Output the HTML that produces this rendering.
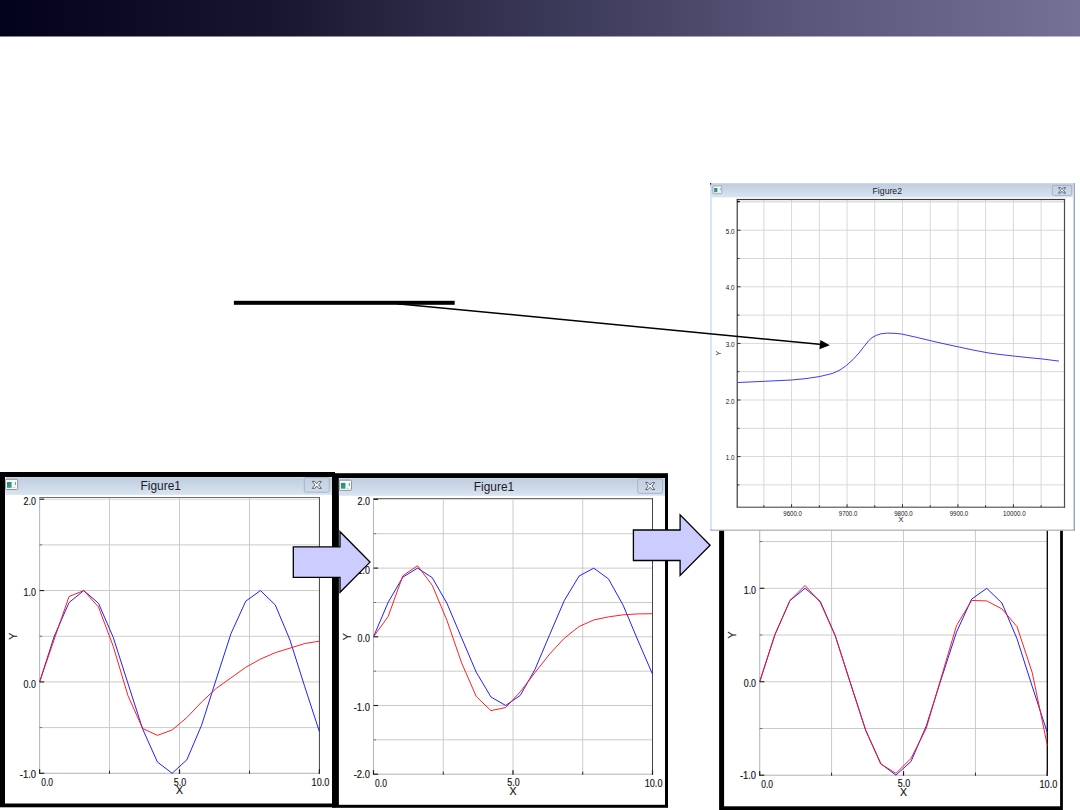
<!DOCTYPE html>
<html lang="en">
<head>
<meta charset="utf-8">
<title>Figure1 / Figure2</title>
<style>
html,body{margin:0;padding:0;background:#fff;}
body{width:1080px;height:810px;position:relative;overflow:hidden;font-family:"Liberation Sans",sans-serif;}
svg{position:absolute;left:0;top:0;display:block;}
svg text{font-family:"Liberation Sans",sans-serif;}
svg .f1 text{stroke:#111;stroke-width:0.15px;}
svg .f1 text.ttl{stroke:none;}
</style>
</head>
<body>
<svg width="1080" height="810" viewBox="0 0 1080 810">
<defs>
<linearGradient id="tb" x1="0" y1="0" x2="0" y2="1"><stop offset="0" stop-color="#d3e1f1"/><stop offset="0.08" stop-color="#c1cedf"/><stop offset="1" stop-color="#d8e4f1"/></linearGradient>
<linearGradient id="cb" x1="0" y1="0" x2="0" y2="1"><stop offset="0" stop-color="#c2cfe0"/><stop offset="1" stop-color="#cfdbea"/></linearGradient>
<linearGradient id="ic" x1="0" y1="0" x2="0.6" y2="1"><stop offset="0" stop-color="#3b6fb6"/><stop offset="0.45" stop-color="#2f8f8c"/><stop offset="1" stop-color="#3aa45c"/></linearGradient>
<linearGradient id="hdr" x1="0" y1="0" x2="1" y2="0"><stop offset="0" stop-color="#02021a"/><stop offset="0.25" stop-color="#18162e"/><stop offset="0.5" stop-color="#393756"/><stop offset="0.75" stop-color="#5a577b"/><stop offset="1" stop-color="#747096"/></linearGradient>
</defs>
<rect id="header-band" x="0" y="0" width="1080" height="36.5" fill="url(#hdr)"/>
<g id="figure1-step3" class="f1">
<rect x="719.1" y="476" width="343.8" height="334" fill="#000"/>
<rect x="724.1" y="480" width="336" height="326.3" fill="#fff"/>
<rect x="759.7" y="728.02" width="287.6" height="0.9" fill="#c6c6c6"/>
<rect x="759.7" y="681.3" width="287.6" height="0.9" fill="#c6c6c6"/>
<rect x="759.7" y="634.58" width="287.6" height="0.9" fill="#c6c6c6"/>
<rect x="759.7" y="587.85" width="287.6" height="0.9" fill="#c6c6c6"/>
<rect x="759.7" y="541.12" width="287.6" height="0.9" fill="#c6c6c6"/>
<rect x="831.15" y="493.15" width="0.9" height="282.05" fill="#c6c6c6"/>
<rect x="903.05" y="493.15" width="0.9" height="282.05" fill="#c6c6c6"/>
<rect x="974.95" y="493.15" width="0.9" height="282.05" fill="#c6c6c6"/>
<rect x="759.2" y="492.65" width="288.7" height="1" fill="#6e6e6e"/>
<rect x="760.7" y="494.4" width="286.1" height="0.9" fill="#cfcfcf"/>
<rect x="759.2" y="774.65" width="288.7" height="1.1" fill="#b8b8b8"/>
<rect x="759.15" y="493.15" width="1.1" height="282.05" fill="#b8b8b8"/>
<rect x="1046.65" y="493.15" width="1.3" height="282.55" fill="#000"/>
<rect x="759.7" y="774.65" width="4.6" height="1.1" fill="#1c1c1c"/>
<rect x="759.7" y="728.02" width="2.6" height="0.9" fill="#6a6a6a"/>
<rect x="759.7" y="681.2" width="4.6" height="1.1" fill="#1c1c1c"/>
<rect x="759.7" y="634.58" width="2.6" height="0.9" fill="#6a6a6a"/>
<rect x="759.7" y="587.75" width="4.6" height="1.1" fill="#1c1c1c"/>
<rect x="759.7" y="541.12" width="2.6" height="0.9" fill="#6a6a6a"/>
<rect x="759.7" y="494.3" width="4.6" height="1.1" fill="#1c1c1c"/>
<rect x="759.1" y="771.2" width="1.2" height="4.5" fill="#1c1c1c"/>
<rect x="831.15" y="772.6" width="0.9" height="3.1" fill="#1c1c1c"/>
<rect x="902.9" y="771.2" width="1.2" height="4.5" fill="#1c1c1c"/>
<rect x="974.95" y="772.6" width="0.9" height="3.1" fill="#1c1c1c"/>
<rect x="1046.7" y="771.2" width="1.2" height="4.5" fill="#1c1c1c"/>
<polyline fill="none" stroke="#1414ff" stroke-width="1.0" stroke-opacity="0.95" stroke-linejoin="round" points="759.7,681.75 774.84,634.81 789.97,600.57 805.11,588.3 820.25,601.33 835.38,636.13 850.52,683.27 865.66,730.01 880.79,763.68 895.93,775.17 911.07,761.38 926.21,726.04 941.34,678.7 956.48,632.2 971.62,599.1 986.75,588.38 1001.89,602.93 1017.03,638.81 1032.16,686.32 1047.3,732.59"/>
<polyline fill="none" stroke="#ff1414" stroke-width="1.0" stroke-opacity="0.95" stroke-linejoin="round" points="759.7,681.75 774.84,635.03 789.97,600.45 805.11,585.5 820.25,602.32 835.38,635.96 850.52,683.62 865.66,730.34 880.79,763.99 895.93,773.33 911.07,758.38 926.21,728.48 941.34,677.08 956.48,625.68 971.62,600.45 986.75,600.92 1001.89,608.86 1017.03,626.61 1032.16,672.4 1047.3,745.3"/>
<text x="756.1" y="593.9" font-size="10.5" text-anchor="end" textLength="12.4" lengthAdjust="spacingAndGlyphs" fill="#111">1.0</text>
<text x="756.1" y="687.35" font-size="10.5" text-anchor="end" textLength="12.4" lengthAdjust="spacingAndGlyphs" fill="#111">0.0</text>
<text x="756.1" y="779.4" font-size="10.5" text-anchor="end" textLength="16.2" lengthAdjust="spacingAndGlyphs" fill="#111">-1.0</text>
<text x="761.3" y="788.2" font-size="10.5" text-anchor="start" textLength="11.8" lengthAdjust="spacingAndGlyphs" fill="#111">0.0</text>
<text x="904" y="787.4" font-size="10.5" text-anchor="middle" textLength="12.4" lengthAdjust="spacingAndGlyphs" fill="#111">5.0</text>
<text x="1057.3" y="788.2" font-size="10.5" text-anchor="end" textLength="17.8" lengthAdjust="spacingAndGlyphs" fill="#111">10.0</text>
<text x="903.5" y="796.2" font-size="10.5" text-anchor="middle" textLength="7" lengthAdjust="spacingAndGlyphs" fill="#111">X</text>
<text transform="translate(735.5,635.03) rotate(-90) scale(-1,1)" font-size="10.5" text-anchor="middle" fill="#111" textLength="7" lengthAdjust="spacingAndGlyphs">Y</text>
</g>
<g id="figure1-step1" class="f1">
<rect x="0" y="472" width="335" height="335.3" fill="#000"/>
<rect x="5" y="477" width="327" height="326.5" fill="#fff"/>
<rect x="5" y="477" width="327" height="17.9" fill="url(#tb)"/>
<rect x="5" y="477" width="1" height="17.9" fill="#e2edf9"/>
<rect x="5.4" y="479.3" width="12.2" height="10.2" rx="1.2" fill="#fbfbfc" stroke="#7d7d80" stroke-width="0.8"/><rect x="7" y="482" width="4.6" height="5.8" fill="url(#ic)"/><rect x="14.9" y="482.1" width="0.9" height="3" fill="url(#ic)"/><rect x="12.4" y="487.3" width="3.2" height="0.7" fill="#c9c9cc"/>
<rect x="304.3" y="477.6" width="25" height="14.6" rx="1.6" fill="url(#cb)" stroke="#9fb0cb" stroke-width="0.9"/><path d="M312.3 481.4 h2.43 L316.8 483.78 L318.87 481.4 h2.43 L318.69 484.9 L321.3 488.4 h-2.43 L316.8 486.02 L314.73 488.4 h-2.43 L314.91 484.9 Z" fill="#fdfdfe" stroke="#434a5a" stroke-width="0.85" stroke-linejoin="round"/>
<text x="160.7" y="490" font-size="12" text-anchor="middle" textLength="40.3" lengthAdjust="spacingAndGlyphs" fill="#1b1b2b" class="ttl">Figure1</text>
<rect x="39.6" y="727.17" width="279.8" height="0.9" fill="#c6c6c6"/>
<rect x="39.6" y="681.48" width="279.8" height="0.9" fill="#c6c6c6"/>
<rect x="39.6" y="635.8" width="279.8" height="0.9" fill="#c6c6c6"/>
<rect x="39.6" y="590.12" width="279.8" height="0.9" fill="#c6c6c6"/>
<rect x="39.6" y="544.43" width="279.8" height="0.9" fill="#c6c6c6"/>
<rect x="109.1" y="497.5" width="0.9" height="275.8" fill="#c6c6c6"/>
<rect x="179.05" y="497.5" width="0.9" height="275.8" fill="#c6c6c6"/>
<rect x="249" y="497.5" width="0.9" height="275.8" fill="#c6c6c6"/>
<rect x="39.1" y="497" width="280.9" height="1" fill="#6e6e6e"/>
<rect x="40.6" y="498.75" width="278.3" height="0.9" fill="#cfcfcf"/>
<rect x="39.1" y="772.75" width="280.9" height="1.1" fill="#b8b8b8"/>
<rect x="39.05" y="497.5" width="1.1" height="275.8" fill="#b8b8b8"/>
<rect x="318.92" y="497.5" width="0.95" height="276.3" fill="#3a3a3a"/>
<rect x="39.6" y="772.75" width="4.6" height="1.1" fill="#1c1c1c"/>
<rect x="39.6" y="727.17" width="2.6" height="0.9" fill="#6a6a6a"/>
<rect x="39.6" y="681.38" width="4.6" height="1.1" fill="#1c1c1c"/>
<rect x="39.6" y="635.8" width="2.6" height="0.9" fill="#6a6a6a"/>
<rect x="39.6" y="590.02" width="4.6" height="1.1" fill="#1c1c1c"/>
<rect x="39.6" y="544.43" width="2.6" height="0.9" fill="#6a6a6a"/>
<rect x="39.6" y="498.65" width="4.6" height="1.1" fill="#1c1c1c"/>
<rect x="39" y="769.3" width="1.2" height="4.5" fill="#1c1c1c"/>
<rect x="109.1" y="770.7" width="0.9" height="3.1" fill="#1c1c1c"/>
<rect x="178.9" y="769.3" width="1.2" height="4.5" fill="#1c1c1c"/>
<rect x="249" y="770.7" width="0.9" height="3.1" fill="#1c1c1c"/>
<rect x="318.8" y="769.3" width="1.2" height="4.5" fill="#1c1c1c"/>
<polyline fill="none" stroke="#1414ff" stroke-width="1.0" stroke-opacity="0.95" stroke-linejoin="round" points="39.6,681.93 54.33,636.04 69.05,602.56 83.78,590.57 98.51,603.31 113.23,637.33 127.96,683.42 142.68,729.11 157.41,762.03 172.14,773.27 186.86,759.79 201.59,725.23 216.32,678.95 231.04,633.48 245.77,601.13 260.49,590.64 275.22,604.87 289.95,639.95 304.67,686.4 319.4,731.64"/>
<polyline fill="none" stroke="#ff1414" stroke-width="1.0" stroke-opacity="0.95" stroke-linejoin="round" points="39.6,681.93 54.33,638.99 69.05,596.51 83.78,590.57 98.51,607.01 113.23,646.3 127.96,695.64 142.68,728.53 157.41,735.38 172.14,729.99 186.86,717.57 201.59,702.03 216.32,688.33 231.04,677.82 245.77,667.31 260.49,659.09 275.22,652.7 289.95,648.13 304.67,643.56 319.4,641.18"/>
<text x="36" y="504.7" font-size="10.5" text-anchor="end" textLength="12.4" lengthAdjust="spacingAndGlyphs" fill="#111">2.0</text>
<text x="36" y="596.17" font-size="10.5" text-anchor="end" textLength="12.4" lengthAdjust="spacingAndGlyphs" fill="#111">1.0</text>
<text x="36" y="687.53" font-size="10.5" text-anchor="end" textLength="12.4" lengthAdjust="spacingAndGlyphs" fill="#111">0.0</text>
<text x="36" y="777.5" font-size="10.5" text-anchor="end" textLength="16.2" lengthAdjust="spacingAndGlyphs" fill="#111">-1.0</text>
<text x="41.2" y="786.3" font-size="10.5" text-anchor="start" textLength="11.8" lengthAdjust="spacingAndGlyphs" fill="#111">0.0</text>
<text x="180" y="785.5" font-size="10.5" text-anchor="middle" textLength="12.4" lengthAdjust="spacingAndGlyphs" fill="#111">5.0</text>
<text x="329.4" y="786.3" font-size="10.5" text-anchor="end" textLength="17.8" lengthAdjust="spacingAndGlyphs" fill="#111">10.0</text>
<text x="179.5" y="794.3" font-size="10.5" text-anchor="middle" textLength="7" lengthAdjust="spacingAndGlyphs" fill="#111">X</text>
<text transform="translate(17,636.25) rotate(-90) scale(-1,1)" font-size="10.5" text-anchor="middle" fill="#111" textLength="7" lengthAdjust="spacingAndGlyphs">Y</text>
</g>
<g id="figure1-step2" class="f1">
<rect x="332" y="473.2" width="336" height="334.6" fill="#000"/>
<rect x="338.9" y="478" width="326.1" height="326.8" fill="#fff"/>
<rect x="338.9" y="478" width="326.1" height="17.8" fill="url(#tb)"/>
<rect x="339.3" y="480.2" width="12.2" height="10.2" rx="1.2" fill="#fbfbfc" stroke="#7d7d80" stroke-width="0.8"/><rect x="340.9" y="482.9" width="4.6" height="5.8" fill="url(#ic)"/><rect x="348.8" y="483" width="0.9" height="3" fill="url(#ic)"/><rect x="346.3" y="488.2" width="3.2" height="0.7" fill="#c9c9cc"/>
<rect x="637.7" y="478.8" width="24.8" height="14.6" rx="1.6" fill="url(#cb)" stroke="#9fb0cb" stroke-width="0.9"/><path d="M645.6 482.6 h2.43 L650.1 484.98 L652.17 482.6 h2.43 L651.99 486.1 L654.6 489.6 h-2.43 L650.1 487.22 L648.03 489.6 h-2.43 L648.21 486.1 Z" fill="#fdfdfe" stroke="#434a5a" stroke-width="0.85" stroke-linejoin="round"/>
<text x="494" y="490.8" font-size="12" text-anchor="middle" textLength="40.3" lengthAdjust="spacingAndGlyphs" fill="#1b1b2b" class="ttl">Figure1</text>
<rect x="373.5" y="739.4" width="279" height="0.9" fill="#c6c6c6"/>
<rect x="373.5" y="705.05" width="279" height="0.9" fill="#c6c6c6"/>
<rect x="373.5" y="670.7" width="279" height="0.9" fill="#c6c6c6"/>
<rect x="373.5" y="636.35" width="279" height="0.9" fill="#c6c6c6"/>
<rect x="373.5" y="602" width="279" height="0.9" fill="#c6c6c6"/>
<rect x="373.5" y="567.65" width="279" height="0.9" fill="#c6c6c6"/>
<rect x="373.5" y="533.3" width="279" height="0.9" fill="#c6c6c6"/>
<rect x="442.8" y="498.5" width="0.9" height="275.7" fill="#c6c6c6"/>
<rect x="512.55" y="498.5" width="0.9" height="275.7" fill="#c6c6c6"/>
<rect x="582.3" y="498.5" width="0.9" height="275.7" fill="#c6c6c6"/>
<rect x="373" y="498" width="280.1" height="1" fill="#6e6e6e"/>
<rect x="374.5" y="498.95" width="277.5" height="0.9" fill="#cfcfcf"/>
<rect x="373" y="773.65" width="280.1" height="1.1" fill="#b8b8b8"/>
<rect x="372.95" y="498.5" width="1.1" height="275.7" fill="#b8b8b8"/>
<rect x="652.02" y="498.5" width="0.95" height="276.2" fill="#3a3a3a"/>
<rect x="373.5" y="773.65" width="4.6" height="1.1" fill="#1c1c1c"/>
<rect x="373.5" y="739.4" width="2.6" height="0.9" fill="#6a6a6a"/>
<rect x="373.5" y="704.95" width="4.6" height="1.1" fill="#1c1c1c"/>
<rect x="373.5" y="670.7" width="2.6" height="0.9" fill="#6a6a6a"/>
<rect x="373.5" y="636.25" width="4.6" height="1.1" fill="#1c1c1c"/>
<rect x="373.5" y="602" width="2.6" height="0.9" fill="#6a6a6a"/>
<rect x="373.5" y="567.55" width="4.6" height="1.1" fill="#1c1c1c"/>
<rect x="373.5" y="533.3" width="2.6" height="0.9" fill="#6a6a6a"/>
<rect x="373.5" y="498.85" width="4.6" height="1.1" fill="#1c1c1c"/>
<rect x="372.9" y="770.2" width="1.2" height="4.5" fill="#1c1c1c"/>
<rect x="442.8" y="771.6" width="0.9" height="3.1" fill="#1c1c1c"/>
<rect x="512.4" y="770.2" width="1.2" height="4.5" fill="#1c1c1c"/>
<rect x="582.3" y="771.6" width="0.9" height="3.1" fill="#1c1c1c"/>
<rect x="651.9" y="770.2" width="1.2" height="4.5" fill="#1c1c1c"/>
<polyline fill="none" stroke="#1414ff" stroke-width="1.0" stroke-opacity="0.95" stroke-linejoin="round" points="373.5,636.8 388.18,602.29 402.87,577.12 417.55,568.1 432.24,577.68 446.92,603.26 461.61,637.92 476.29,672.28 490.97,697.03 505.66,705.48 520.34,695.34 535.03,669.36 549.71,634.56 564.39,600.37 579.08,576.04 593.76,568.16 608.45,578.85 623.13,605.23 637.82,640.16 652.5,674.17"/>
<polyline fill="none" stroke="#ff1414" stroke-width="1.0" stroke-opacity="0.95" stroke-linejoin="round" points="373.5,636.8 388.18,616.46 402.87,575.73 417.55,565.7 432.24,585.27 446.92,620.31 461.61,662.91 476.29,696.57 490.97,710.65 505.66,707.56 520.34,691.76 535.03,672.52 549.71,653.98 564.39,638.17 579.08,626.5 593.76,619.97 608.45,616.88 623.13,614.82 637.82,613.92 652.5,613.72"/>
<text x="369.9" y="504.9" font-size="10.5" text-anchor="end" textLength="12.4" lengthAdjust="spacingAndGlyphs" fill="#111">2.0</text>
<text x="369.9" y="573.7" font-size="10.5" text-anchor="end" textLength="12.4" lengthAdjust="spacingAndGlyphs" fill="#111">1.0</text>
<text x="369.9" y="642.4" font-size="10.5" text-anchor="end" textLength="12.4" lengthAdjust="spacingAndGlyphs" fill="#111">0.0</text>
<text x="369.9" y="711.1" font-size="10.5" text-anchor="end" textLength="16.2" lengthAdjust="spacingAndGlyphs" fill="#111">-1.0</text>
<text x="369.9" y="778.4" font-size="10.5" text-anchor="end" textLength="16.2" lengthAdjust="spacingAndGlyphs" fill="#111">-2.0</text>
<text x="375.1" y="787.2" font-size="10.5" text-anchor="start" textLength="11.8" lengthAdjust="spacingAndGlyphs" fill="#111">0.0</text>
<text x="513.5" y="786.4" font-size="10.5" text-anchor="middle" textLength="12.4" lengthAdjust="spacingAndGlyphs" fill="#111">5.0</text>
<text x="662.5" y="787.2" font-size="10.5" text-anchor="end" textLength="17.8" lengthAdjust="spacingAndGlyphs" fill="#111">10.0</text>
<text x="513" y="795.2" font-size="10.5" text-anchor="middle" textLength="7" lengthAdjust="spacingAndGlyphs" fill="#111">X</text>
<text transform="translate(351,636.8) rotate(-90) scale(-1,1)" font-size="10.5" text-anchor="middle" fill="#111" textLength="7" lengthAdjust="spacingAndGlyphs">Y</text>
</g>
<g id="step-arrows">
<polygon fill="#ccccff" stroke="#000" stroke-width="1.3" stroke-linejoin="miter" points="293.3,546.9 340,546.9 340,531.7 370,562.1 340,592.3 340,577.4 293.3,577.4"/>
<polygon fill="#ccccff" stroke="#000" stroke-width="1.3" stroke-linejoin="miter" points="633.4,530 680.1,530 680.1,514.8 710.1,545.2 680.1,575.4 680.1,560.5 633.4,560.5"/>
</g>
<g id="figure2-window">
<rect x="710.1" y="183" width="364.7" height="347.6" fill="#d6e3f3"/>
<rect x="1073.9" y="183" width="0.9" height="347.6" fill="#8e929c"/>
<rect x="710.1" y="529.6" width="364.7" height="1" fill="#9a9ea7"/>
<rect x="711.9" y="184" width="361" height="345.4" fill="#fff"/>
<rect x="710.9" y="183" width="363" height="14.4" fill="url(#tb)"/>
<rect x="710.1" y="183" width="1" height="1.6" fill="#111"/>
<rect x="713" y="186.1" width="8.7" height="7.6" rx="0.86" fill="#fbfbfc" stroke="#7d7d80" stroke-width="0.58"/><rect x="714.15" y="188.04" width="3.31" height="4.18" fill="url(#ic)"/><rect x="719.84" y="188.12" width="0.65" height="2.16" fill="url(#ic)"/><rect x="718.04" y="191.86" width="2.3" height="0.5" fill="#c9c9cc"/>
<rect x="1052.4" y="185.4" width="19.3" height="10" rx="1.6" fill="url(#cb)" stroke="#9fb0cb" stroke-width="0.9"/><path d="M1058.6 187.6 h1.86 L1062.05 189.5 L1063.64 187.6 h1.86 L1063.5 190.4 L1065.5 193.2 h-1.86 L1062.05 191.3 L1060.46 193.2 h-1.86 L1060.6 190.4 Z" fill="#fdfdfe" stroke="#434a5a" stroke-width="0.85" stroke-linejoin="round"/>
<text x="887.3" y="193.9" font-size="9.4" text-anchor="middle" textLength="29.5" lengthAdjust="spacingAndGlyphs" fill="#1b1b2b" class="ttl">Figure2</text>
<rect x="763.43" y="199.5" width="0.9" height="307.7" fill="#d4d4d4"/>
<rect x="791.15" y="199.5" width="0.9" height="307.7" fill="#d4d4d4"/>
<rect x="818.87" y="199.5" width="0.9" height="307.7" fill="#d4d4d4"/>
<rect x="846.59" y="199.5" width="0.9" height="307.7" fill="#d4d4d4"/>
<rect x="874.31" y="199.5" width="0.9" height="307.7" fill="#d4d4d4"/>
<rect x="902.03" y="199.5" width="0.9" height="307.7" fill="#d4d4d4"/>
<rect x="929.75" y="199.5" width="0.9" height="307.7" fill="#d4d4d4"/>
<rect x="957.47" y="199.5" width="0.9" height="307.7" fill="#d4d4d4"/>
<rect x="985.19" y="199.5" width="0.9" height="307.7" fill="#d4d4d4"/>
<rect x="1012.91" y="199.5" width="0.9" height="307.7" fill="#d4d4d4"/>
<rect x="1040.63" y="199.5" width="0.9" height="307.7" fill="#d4d4d4"/>
<rect x="737.2" y="201.45" width="327.3" height="0.9" fill="#d4d4d4"/>
<rect x="737.2" y="229.75" width="327.3" height="0.9" fill="#d4d4d4"/>
<rect x="737.2" y="258.05" width="327.3" height="0.9" fill="#d4d4d4"/>
<rect x="737.2" y="286.35" width="327.3" height="0.9" fill="#d4d4d4"/>
<rect x="737.2" y="314.65" width="327.3" height="0.9" fill="#d4d4d4"/>
<rect x="737.2" y="342.95" width="327.3" height="0.9" fill="#d4d4d4"/>
<rect x="737.2" y="371.25" width="327.3" height="0.9" fill="#d4d4d4"/>
<rect x="737.2" y="399.55" width="327.3" height="0.9" fill="#d4d4d4"/>
<rect x="737.2" y="427.85" width="327.3" height="0.9" fill="#d4d4d4"/>
<rect x="737.2" y="456.15" width="327.3" height="0.9" fill="#d4d4d4"/>
<rect x="737.2" y="484.45" width="327.3" height="0.9" fill="#d4d4d4"/>
<rect x="736.7" y="198.9" width="328.4" height="1.2" fill="#3c3c3c"/>
<rect x="738.2" y="201.15" width="325.8" height="0.9" fill="#dedede"/>
<rect x="736.7" y="506.65" width="328.4" height="1.1" fill="#4c4c4c"/>
<rect x="736.65" y="199.5" width="1.1" height="307.7" fill="#2c2c2c"/>
<rect x="1063.9" y="199.5" width="1.2" height="308.2" fill="#4c4c4c"/>
<rect x="737.2" y="201.45" width="2.2" height="0.9" fill="#222"/>
<rect x="737.2" y="229.75" width="3.4" height="0.9" fill="#222"/>
<rect x="737.2" y="258.05" width="2.2" height="0.9" fill="#222"/>
<rect x="737.2" y="286.35" width="3.4" height="0.9" fill="#222"/>
<rect x="737.2" y="314.65" width="2.2" height="0.9" fill="#222"/>
<rect x="737.2" y="342.95" width="3.4" height="0.9" fill="#222"/>
<rect x="737.2" y="371.25" width="2.2" height="0.9" fill="#222"/>
<rect x="737.2" y="399.55" width="3.4" height="0.9" fill="#222"/>
<rect x="737.2" y="427.85" width="2.2" height="0.9" fill="#222"/>
<rect x="737.2" y="456.15" width="3.4" height="0.9" fill="#222"/>
<rect x="737.2" y="484.45" width="2.2" height="0.9" fill="#222"/>
<rect x="737.2" y="200.9" width="2.6" height="1.2" fill="#111"/>
<rect x="763.43" y="505.2" width="0.9" height="2" fill="#222"/>
<rect x="791.15" y="504.2" width="0.9" height="3" fill="#222"/>
<rect x="818.87" y="505.2" width="0.9" height="2" fill="#222"/>
<rect x="846.59" y="504.2" width="0.9" height="3" fill="#222"/>
<rect x="874.31" y="505.2" width="0.9" height="2" fill="#222"/>
<rect x="902.03" y="504.2" width="0.9" height="3" fill="#222"/>
<rect x="929.75" y="505.2" width="0.9" height="2" fill="#222"/>
<rect x="957.47" y="504.2" width="0.9" height="3" fill="#222"/>
<rect x="985.19" y="505.2" width="0.9" height="2" fill="#222"/>
<rect x="1012.91" y="504.2" width="0.9" height="3" fill="#222"/>
<rect x="1040.63" y="505.2" width="0.9" height="2" fill="#222"/>
<polyline fill="none" stroke="#2626f2" stroke-width="0.95" stroke-opacity="0.95" stroke-linejoin="round" points="737.9,382.5 764.6,381.3 791.4,380 806,378.6 819.7,376.5 832.3,373.5 840,370 846.5,365.4 853,359.5 859.1,352.9 864,346.5 868.5,340.9 872,337.6 876.4,335.3 881,333.8 887.4,333.1 894,333.3 901.6,334 916,337.2 931.5,340.9 945,344 959.8,347.2 974,350.2 988.2,352.9 1000,354.5 1013.4,356 1028,357.6 1041.7,358.9 1059,361.1"/>
<text x="734.6" y="233.8" font-size="7.6" text-anchor="end" textLength="8.8" lengthAdjust="spacingAndGlyphs" fill="#111">5.0</text>
<text x="734.6" y="290.4" font-size="7.6" text-anchor="end" textLength="8.8" lengthAdjust="spacingAndGlyphs" fill="#111">4.0</text>
<text x="734.6" y="347" font-size="7.6" text-anchor="end" textLength="8.8" lengthAdjust="spacingAndGlyphs" fill="#111">3.0</text>
<text x="734.6" y="403.6" font-size="7.6" text-anchor="end" textLength="8.8" lengthAdjust="spacingAndGlyphs" fill="#111">2.0</text>
<text x="734.6" y="460.2" font-size="7.6" text-anchor="end" textLength="8.8" lengthAdjust="spacingAndGlyphs" fill="#111">1.0</text>
<text x="792.6" y="515.9" font-size="7.6" text-anchor="middle" textLength="18.5" lengthAdjust="spacingAndGlyphs" fill="#111">9600.0</text>
<text x="848.04" y="515.9" font-size="7.6" text-anchor="middle" textLength="18.5" lengthAdjust="spacingAndGlyphs" fill="#111">9700.0</text>
<text x="903.48" y="515.9" font-size="7.6" text-anchor="middle" textLength="18.5" lengthAdjust="spacingAndGlyphs" fill="#111">9800.0</text>
<text x="958.92" y="515.9" font-size="7.6" text-anchor="middle" textLength="18.5" lengthAdjust="spacingAndGlyphs" fill="#111">9900.0</text>
<text x="1014.36" y="515.9" font-size="7.6" text-anchor="middle" textLength="22.5" lengthAdjust="spacingAndGlyphs" fill="#111">10000.0</text>
<text x="901" y="522" font-size="7.6" text-anchor="middle" textLength="5" lengthAdjust="spacingAndGlyphs" fill="#111">X</text>
<text transform="translate(720.5,353.35) rotate(-90) scale(-1,1)" font-size="7.6" text-anchor="middle" fill="#111" textLength="5" lengthAdjust="spacingAndGlyphs">Y</text>
</g>
<g id="callout">
<rect x="233.9" y="300.8" width="220.8" height="4" fill="#000"/>
<line x1="397" y1="303.7" x2="822" y2="344.5" stroke="#000" stroke-width="1.5"/>
<polygon points="829.8,345.3 819.4,349.3 820.4,340.1" fill="#000"/>
</g>
</svg>
</body>
</html>
